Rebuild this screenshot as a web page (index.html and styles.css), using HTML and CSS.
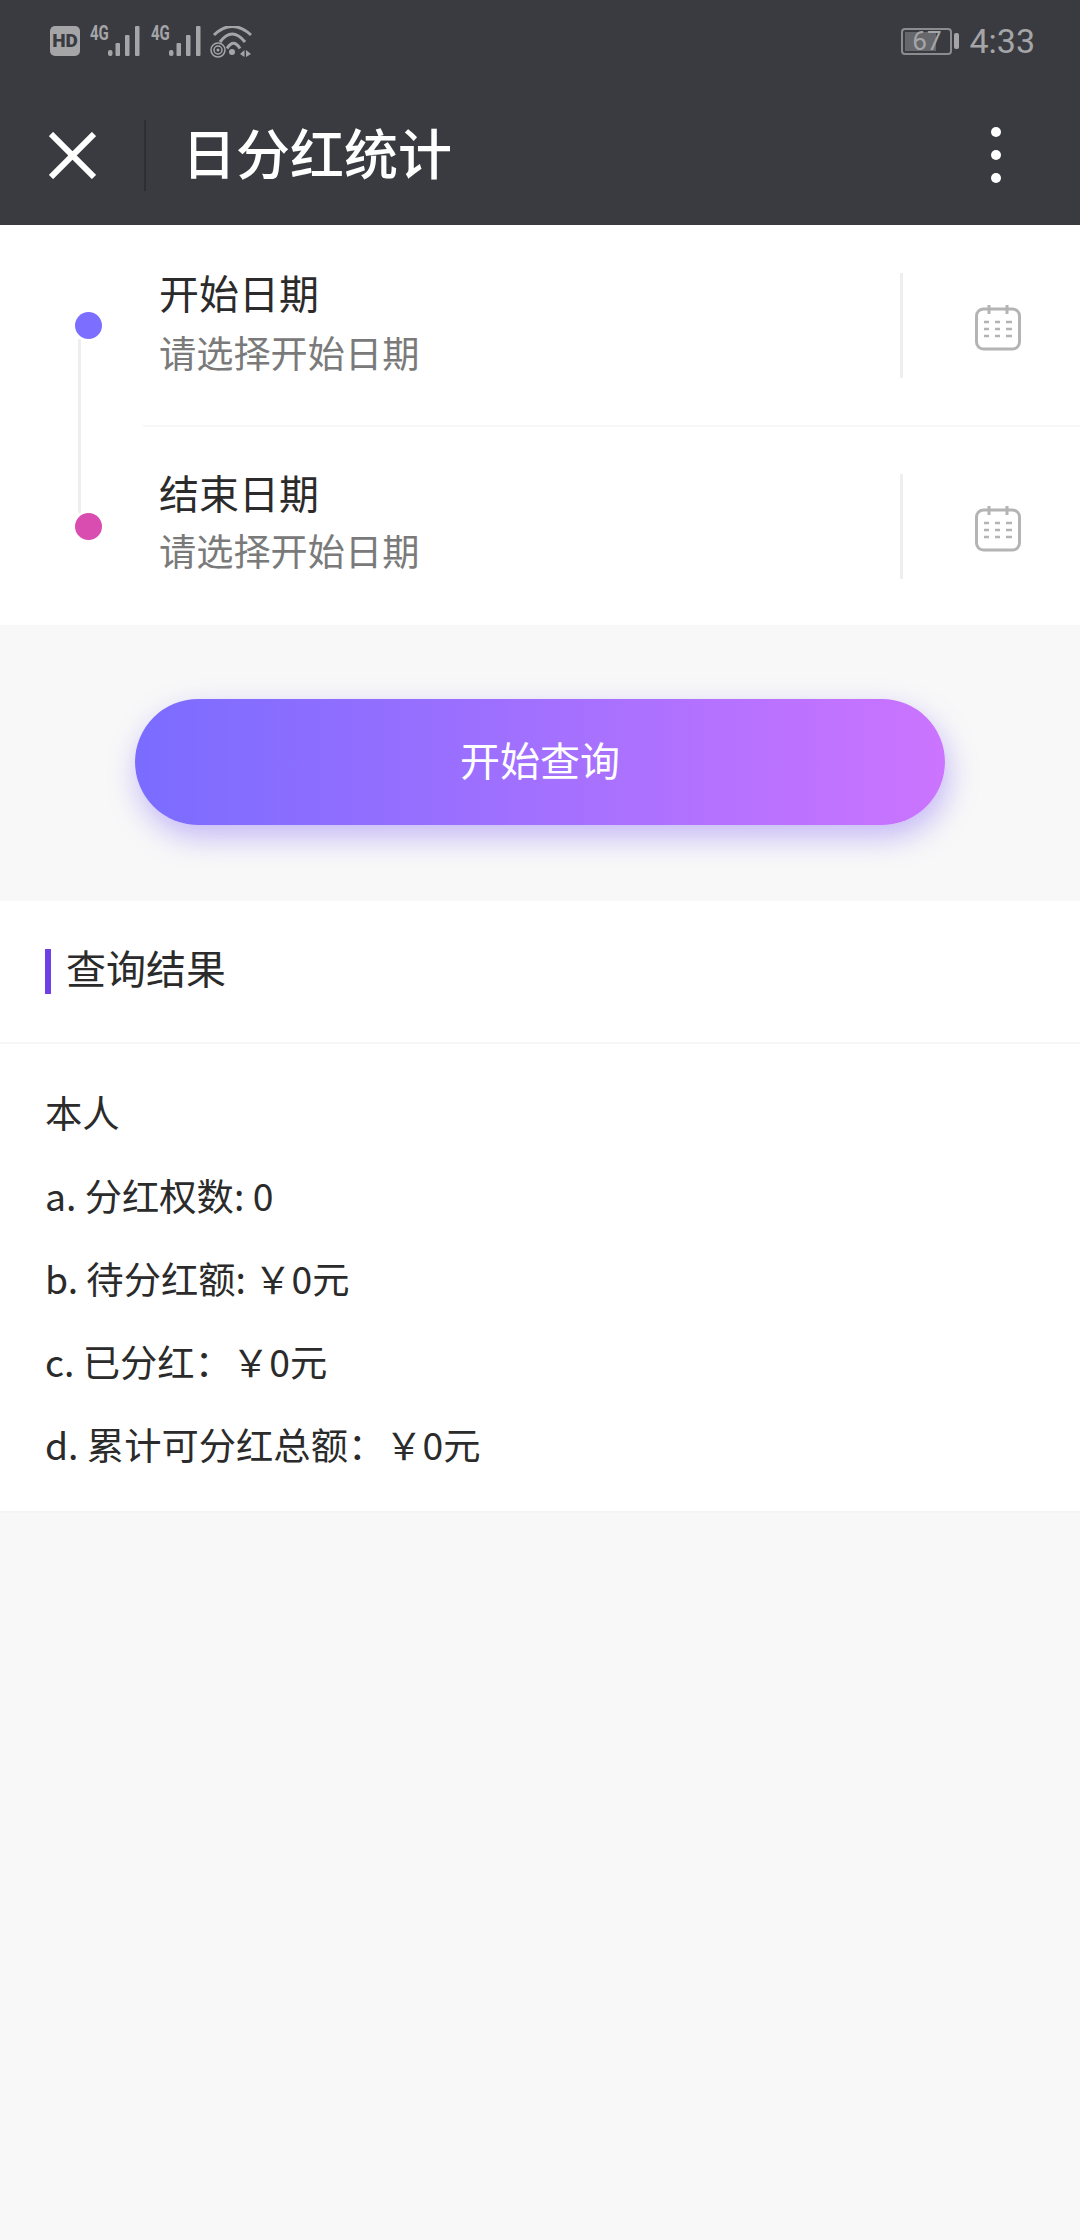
FILE: index.html
```html
<!DOCTYPE html>
<html lang="zh-CN">
<head>
    <meta charset="UTF-8">
    <meta name="viewport" content="width=device-width, initial-scale=1.0">
    <title>日分红统计</title>
    <link rel="stylesheet" href="styles.css">
</head>
<body>
    <header class="top">
        <div class="status">
            <span class="hd">HD</span>
            <span class="net">4G</span>
            <svg class="signal" width="32" height="30" viewBox="0 0 32 30" fill="#a5a5a8">
                <rect x="0" y="24" width="4.5" height="6" rx="2"/>
                <rect x="7.5" y="17" width="4.5" height="13" rx="1"/>
                <rect x="17" y="9" width="4.5" height="21" rx="1"/>
                <rect x="27" y="0" width="4.5" height="30" rx="1"/>
            </svg>
            <span class="net net-second">4G</span>
            <svg class="signal" width="32" height="30" viewBox="0 0 32 30" fill="#a5a5a8">
                <rect x="0" y="24" width="4.5" height="6" rx="2"/>
                <rect x="7.5" y="17" width="4.5" height="13" rx="1"/>
                <rect x="17" y="9" width="4.5" height="21" rx="1"/>
                <rect x="27" y="0" width="4.5" height="30" rx="1"/>
            </svg>
            <svg class="wifi" width="42" height="32" viewBox="0 0 42 32" fill="none" stroke="#a5a5a8">
                <path d="M4 9 Q22 -8 41 9" stroke-width="3"/>
                <path d="M10 16 Q22 0 35 16" stroke-width="3"/>
                <path d="M17 22.5 Q23.5 12 30 22.5" stroke-width="3"/>
                <circle cx="8" cy="24" r="7" stroke-width="1.5"/>
                <circle cx="8" cy="24" r="4" stroke-width="1.5"/>
                <circle cx="8" cy="24" r="1.5" fill="#a5a5a8" stroke="none"/>
                <circle cx="22" cy="26" r="3" fill="#a5a5a8" stroke="none"/>
                <path d="M34.5 24 L30 28 L34.5 31 Z M36 24 L41 28 L36 31 Z" fill="#a5a5a8" stroke="none"/>
            </svg>
            <span class="status-right">
                <span class="battery"><span class="battery-level"></span><span class="battery-num">67</span></span>
                <span class="battery-nub"></span>
                <span class="clock">4:33</span>
            </span>
        </div>
        <nav class="nav">
            <svg class="close" width="47" height="47" viewBox="0 0 47 47" stroke="#fff" stroke-width="6">
                <path d="M2 2 L45 45 M45 2 L2 45"/>
            </svg>
            <span class="nav-line"></span>
            <h1>日分红统计</h1>
            <div class="more"><i></i><i></i><i></i></div>
        </nav>
    </header>

    <section class="dates">
        <div class="rail">
            <span class="dot dot-start"></span>
            <span class="rail-line"></span>
            <span class="dot dot-end"></span>
        </div>
        <div class="date-list">
            <div class="date-row">
                <div class="date-text">
                    <div class="date-label">开始日期</div>
                    <div class="date-hint">请选择开始日期</div>
                </div>
                <span class="date-line"></span>
                <div class="date-icon">
                    <svg width="46" height="46" viewBox="0 0 46 46" fill="none" stroke="#b4b4b4" stroke-width="3">
                        <rect x="1.5" y="4" width="43" height="40" rx="7"/>
                        <path d="M14 0 V9 M32 0 V9"/>
                        <path d="M9 17 H14 M20 17 H25 M31 17 H37 M9 24 H14 M20 24 H25 M31 24 H37 M9 31 H14 M20 31 H25 M31 31 H37" stroke-width="2.5"/>
                    </svg>
                </div>
            </div>
            <div class="date-row date-row-end">
                <div class="date-text">
                    <div class="date-label">结束日期</div>
                    <div class="date-hint">请选择开始日期</div>
                </div>
                <span class="date-line"></span>
                <div class="date-icon">
                    <svg width="46" height="46" viewBox="0 0 46 46" fill="none" stroke="#b4b4b4" stroke-width="3">
                        <rect x="1.5" y="4" width="43" height="40" rx="7"/>
                        <path d="M14 0 V9 M32 0 V9"/>
                        <path d="M9 17 H14 M20 17 H25 M31 17 H37 M9 24 H14 M20 24 H25 M31 24 H37 M9 31 H14 M20 31 H25 M31 31 H37" stroke-width="2.5"/>
                    </svg>
                </div>
            </div>
        </div>
    </section>

    <div class="action">
        <button class="query-btn">开始查询</button>
    </div>

    <section class="result">
        <h2 class="result-title"><span>查询结果</span></h2>
        <div class="result-list">
            <p>本人</p>
            <p>a. 分红权数: 0</p>
            <p>b. 待分红额: ￥0元</p>
            <p>c. 已分红：￥0元</p>
            <p>d. 累计可分红总额：￥0元</p>
        </div>
    </section>
</body>
</html>
```

FILE: styles.css
```css
body {
    margin: 0;
    min-height: 2240px;
    background-color: #f8f8f8;
    color: #2b2b2b;
    font-family: "Noto Sans CJK SC", "Noto Sans", sans-serif;
}

/* header */
.top {
    height: 225px;
    background-color: #3a3b41;
}

.status {
    display: flex;
    align-items: flex-start;
    height: 85px;
    padding: 26px 45px 0 50px;
    box-sizing: border-box;
    color: #a5a5a8;
}

.hd {
    width: 30px;
    height: 30px;
    border-radius: 5px;
    background-color: #a5a5a8;
    color: #3a3b41;
    font: 900 19px/30px "Roboto", sans-serif;
    text-align: center;
}

.net {
    width: 18px;
    margin-left: 10px;
    font: bold 20px/15px "Roboto", sans-serif;
    transform: scaleX(0.75);
    transform-origin: left top;
}

.net-second {
    margin-left: 11px;
}

.signal {
    flex: none;
}

.wifi {
    margin-left: 9px;
    flex: none;
}

.status-right {
    display: flex;
    align-items: center;
    margin-left: auto;
    height: 30px;
}

.battery {
    position: relative;
    width: 51px;
    height: 27px;
    box-sizing: border-box;
    border: 2px solid #8b8c90;
    border-radius: 4px;
    text-align: center;
    font: 26px/23px "Roboto", sans-serif;
}

.battery-level {
    position: absolute;
    left: 2px;
    top: 2px;
    bottom: 2px;
    width: 31px;
    background-color: #66676b;
}

.battery-num {
    position: relative;
}

.battery-nub {
    width: 5px;
    height: 16px;
    margin-left: 2px;
    border-radius: 2px;
    background-color: #a5a5a8;
}

.clock {
    margin-left: 10px;
    font: 34px/30px "Roboto", sans-serif;
}

.nav {
    display: flex;
    align-items: center;
    height: 140px;
    padding-left: 49px;
}

.close {
    flex: none;
}

.nav-line {
    width: 2px;
    height: 71px;
    margin-left: 48px;
    background-color: #2e2f34;
}

h1 {
    margin: 0 0 6px 36px;
    color: #fff;
    font-size: 54px;
    font-weight: 500;
    line-height: 70px;
}

.more {
    display: flex;
    flex-direction: column;
    gap: 13px;
    margin-left: auto;
    margin-right: 79px;
}

.more i {
    width: 10px;
    height: 10px;
    border-radius: 50%;
    background-color: #fff;
}

/* date picker */
.dates {
    display: flex;
    height: 400px;
    background-color: #fff;
}

.rail {
    display: flex;
    flex-direction: column;
    flex: none;
    width: 68px;
    padding: 87px 0 0 75px;
    height: 228px;
}

.dot {
    flex: none;
    width: 27px;
    height: 27px;
    border-radius: 50%;
}

.dot-start {
    background-color: #7c6fff;
}

.dot-end {
    background-color: #d94cb0;
}

.rail-line {
    flex: 1;
    width: 3px;
    margin-left: 3px;
    background-color: #eeeeee;
}

.date-list {
    flex: 1;
}

.date-row {
    display: flex;
    align-items: center;
    height: 202px;
    box-sizing: border-box;
    border-bottom: 2px solid #f7f7f7;
}

.date-row-end {
    height: 198px;
    border-bottom: 0;
}

.date-text {
    flex: 1;
    padding: 0 0 6px 16px;
}

.date-row-end .date-text {
    padding-bottom: 10px;
}

.date-label {
    font-size: 40px;
    line-height: 58px;
}

.date-hint {
    margin-top: 2px;
    color: #7a7a7a;
    font-size: 37.2px;
    line-height: 58px;
}

.date-row-end .date-hint {
    margin-top: 0;
}

.date-line {
    width: 3px;
    height: 105px;
    background-color: #eeeeee;
}

.date-icon {
    display: flex;
    justify-content: center;
    width: 177px;
    padding: 5px 0 0 13px;
    box-sizing: border-box;
}

/* query button */
.action {
    display: flex;
    justify-content: center;
    padding: 74px 0 76px;
}

.query-btn {
    width: 810px;
    height: 126px;
    padding: 0 0 6px;
    border: 0;
    border-radius: 63px;
    background: linear-gradient(90deg, #7a6cff, #cb74ff);
    box-shadow: 3px 12px 30px rgba(125, 95, 245, 0.42);
    color: #fff;
    font-family: inherit;
    font-size: 40px;
}

/* result card */
.result {
    background-color: #fff;
    border-bottom: 2px solid #f4f4f4;
}

.result-title {
    display: flex;
    align-items: center;
    height: 143px;
    margin: 0;
    padding-left: 45px;
    border-bottom: 2px solid #f6f6f6;
    box-sizing: border-box;
    font-size: 40px;
    font-weight: 400;
}

.result-title::before {
    content: "";
    width: 6px;
    height: 45px;
    background-color: #6f3fe8;
}

.result-title span {
    margin: 0 0 10px 15px;
    line-height: 46px;
}

.result-list {
    padding: 27px 45px 0;
    height: 440px;
}

.result-list p {
    margin: 0;
    font-size: 37.3px;
    line-height: 83px;
}
```
